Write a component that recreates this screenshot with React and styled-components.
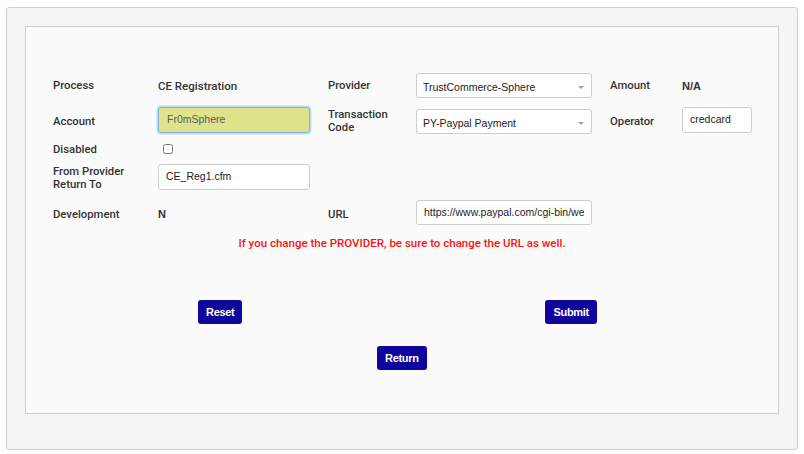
import React from "react"
import styled, { createGlobalStyle } from "styled-components"

const GlobalStyle = createGlobalStyle`
  body {
    margin: 0;
    background: #fff;
    font-family: Roboto, "Liberation Sans", Arial, sans-serif;
  }
`

const Page = styled.div`
  padding: 7px 6px 4px 6px;
`

const Outer = styled.div`
  background: #f5f5f5;
  border: 1px solid #d0d0d0;
  border-radius: 3px;
  padding: 18px 18px 35px 18px;
`

const Inner = styled.div`
  background: #fbfbfb;
  border: 1px solid #cfcfcf;
  height: 388px;
  box-sizing: border-box;
  padding-top: 46px;
`

const FormGrid = styled.div`
  display: grid;
  grid-template-columns: 105px 170px 88px 194px 72px auto;
  grid-template-rows: 25px 28px 13px 27px 27px;
  row-gap: 8px;
  align-items: center;
  padding-left: 27px;
`

const Label = styled.div`
  font-size: 11.3px;
  font-weight: 500;
  color: #333;
  line-height: 13px;
  padding-top: ${(p) => p.$dy || 0}px;
`

const Value = styled.div`
  font-family: ${(p) => (p.$bold ? '"Liberation Sans", Arial, sans-serif' : "Roboto, sans-serif")};
  font-weight: ${(p) => (p.$bold ? 700 : 500)};
  font-size: ${(p) => (p.$bold ? 11 : 11.5)}px;
  color: #333;
  padding-top: ${(p) => p.$dy || 0}px;
`

const Cell = styled.div`
  align-self: ${(p) => p.$align || "center"};
`

const TextInput = styled.input`
  box-sizing: border-box;
  width: ${(p) => p.$w || 152}px;
  height: ${(p) => p.$h || 26}px;
  border: 1px solid #cdcdcd;
  border-radius: 3px;
  background: #fff;
  padding: 0 7px 2px;
  font-family: "Liberation Sans", Arial, sans-serif;
  font-size: 10.5px;
  color: #1c1c1c;
  outline: none;
  display: block;
`

const FocusInput = styled(TextInput)`
  background: #dfe389;
  border: 1px solid #7fb0e8;
  box-shadow: 0 0 0 1.5px rgba(130, 180, 240, 0.45);
  color: #555a6a;
  padding-left: 8px;
`

const SelectWrap = styled.div`
  position: relative;
  width: 176px;
  height: 25px;
  margin-top: ${(p) => p.$mt || 0}px;
  &::after {
    content: "";
    position: absolute;
    right: 8px;
    top: 50%;
    border-left: 3px solid transparent;
    border-right: 3px solid transparent;
    border-top: 3px solid #a0a0a0;
    pointer-events: none;
  }
`

const Select = styled.select`
  appearance: none;
  box-sizing: border-box;
  width: 100%;
  height: 100%;
  border: 1px solid #cdcdcd;
  border-radius: 3px;
  background: #fff;
  padding: 3px 6px 0;
  font-family: "Liberation Sans", Arial, sans-serif;
  font-size: 10.5px;
  color: #1c1c1c;
  outline: none;
`

const Check = styled.input`
  display: block;
  width: 10px;
  height: 10px;
  margin: 0 0 0 5px;
  accent-color: #555;
`

const Warning = styled.p`
  margin: 11px 0 0;
  text-align: center;
  color: #ff1010;
  font-size: 11.5px;
  font-weight: 500;
  line-height: 14px;
`

const ButtonRow = styled.div`
  display: flex;
  gap: 303px;
  padding-left: ${(p) => p.$pl || 0}px;
  margin-top: ${(p) => p.$mt || 0}px;
`

const Button = styled.button`
  background: #10069c;
  color: #fff;
  border: none;
  border-radius: 3px;
  height: 24px;
  padding: 0 8px;
  font-family: "Liberation Sans", Arial, sans-serif;
  font-weight: 700;
  font-size: 11px;
  letter-spacing: -0.3px;
  cursor: pointer;
`

export default function App() {
  return (
    <Page>
      <GlobalStyle />
      <Outer>
        <Inner>
          <FormGrid>
            <Label>Process</Label>
            <Value>CE Registration</Value>
            <Label>Provider</Label>
            <SelectWrap>
              <Select defaultValue="ts">
                <option value="ts">TrustCommerce-Sphere</option>
              </Select>
            </SelectWrap>
            <Label>Amount</Label>
            <Value $bold>N/A</Value>

            <Label $dy={2}>Account</Label>
            <Cell>
              <FocusInput defaultValue="Fr0mSphere" />
            </Cell>
            <Label $dy={2}>Transaction<br />Code</Label>
            <SelectWrap $mt={3}>
              <Select defaultValue="py">
                <option value="py">PY-Paypal Payment</option>
              </Select>
            </SelectWrap>
            <Label $dy={2}>Operator</Label>
            <Cell>
              <TextInput $w={70} defaultValue="credcard" />
            </Cell>

            <Label $dy={1}>Disabled</Label>
            <Cell>
              <Check type="checkbox" />
            </Cell>
            <div />
            <div />
            <div />
            <div />

            <Label $dy={2}>From Provider<br />Return To</Label>
            <Cell>
              <TextInput defaultValue="CE_Reg1.cfm" />
            </Cell>
            <div />
            <div />
            <div />
            <div />

            <Label $dy={5}>Development</Label>
            <Value $bold $dy={5}>N</Value>
            <Label $dy={5}>URL</Label>
            <Cell $align="end">
              <TextInput $w={176} $h={25} defaultValue="https://www.paypal.com/cgi-bin/webscr" />
            </Cell>
            <div />
            <div />
          </FormGrid>

          <Warning>If you change the PROVIDER, be sure to change the URL as well.</Warning>

          <ButtonRow $pl={172} $mt={50}>
            <Button>Reset</Button>
            <Button>Submit</Button>
          </ButtonRow>
          <ButtonRow $pl={351} $mt={22}>
            <Button>Return</Button>
          </ButtonRow>
        </Inner>
      </Outer>
    </Page>
  )
}
